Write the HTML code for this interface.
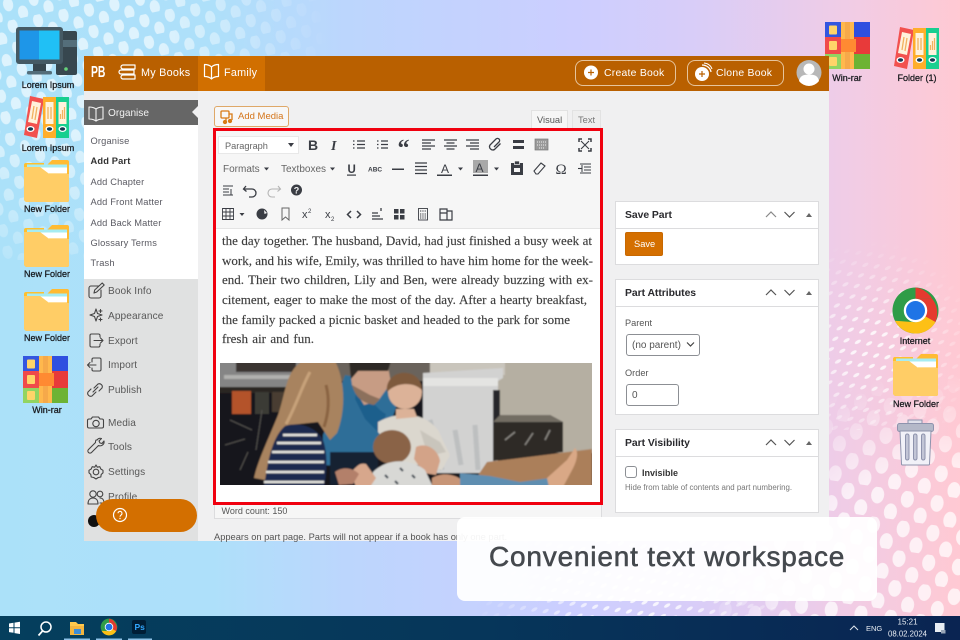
<!DOCTYPE html>
<html lang="en">
<head>
<meta charset="utf-8">
<title>Convenient text workspace</title>
<style>
*{box-sizing:border-box}
html,body{margin:0;padding:0;width:960px;height:640px;overflow:hidden}
body{position:relative;font-family:"Liberation Sans","Noto Sans CJK JP",sans-serif;background:linear-gradient(90deg,#abe1f9 0%,#aee0fa 22%,#bcd6fd 36%,#ccceff 60%,#d8cdf8 72%,#f0cce6 88%,#ffc9d3 100%)}
.abs,.t{position:absolute}
.t{white-space:nowrap;line-height:14px}
svg.layer{position:absolute;left:0;top:0;width:960px;height:640px}
.dl{font-size:9px;color:#16181c;transform:translateX(-50%);-webkit-text-stroke:.25px #16181c}
.sub{left:90.5px;font-size:9.3px;color:#5a5a62;letter-spacing:.15px}
.menu{left:108px;font-size:10.1px;color:#585858;letter-spacing:.1px}
.hd{color:#fff;font-size:10.8px;letter-spacing:.25px}
.panel{position:absolute;left:615px;width:204px;background:#fff;border:1px solid #dcdcde}
.panel .ph{height:27px;border-bottom:1px solid #dcdcde}
.pt{font-size:10.4px;color:#2a2a2e;font-weight:700;letter-spacing:-.05px;left:625px}
.pl{font-size:9.2px;color:#555;left:625px}
.ser{position:absolute;left:222px;height:20px;line-height:20px;font-family:"Liberation Serif","Noto Serif CJK SC",serif;font-size:13px;color:#3d3d3d;text-align:justify;text-align-last:justify;-webkit-text-stroke:.15px #3d3d3d}
.tb{font-size:9.6px;color:#666}
</style>
</head>
<body>

<!-- desktop dots -->
<svg class="layer" viewBox="0 0 960 640">
<defs>
<pattern id="d1" width="26" height="22" patternUnits="userSpaceOnUse" patternTransform="rotate(-12)"><ellipse cx="7" cy="6" rx="5" ry="7" fill="#fff" fill-opacity=".6"/><ellipse cx="20" cy="17" rx="5" ry="7" fill="#fff" fill-opacity=".6"/></pattern>
<pattern id="d2" width="30" height="30" patternUnits="userSpaceOnUse" patternTransform="rotate(8)"><ellipse cx="8" cy="8" rx="6.5" ry="8.5" fill="#fff" fill-opacity=".72"/><ellipse cx="23" cy="23" rx="6.5" ry="8.5" fill="#fff" fill-opacity=".72"/></pattern>
<pattern id="d3" width="18" height="14" patternUnits="userSpaceOnUse" patternTransform="rotate(-30)"><ellipse cx="5" cy="4" rx="3.5" ry="1.6" fill="#fff" fill-opacity=".8"/><ellipse cx="14" cy="11" rx="3.5" ry="1.6" fill="#fff" fill-opacity=".8"/></pattern>
<radialGradient id="m1" gradientUnits="userSpaceOnUse" cx="60" cy="40" r="270"><stop offset=".35" stop-color="#fff"/><stop offset="1" stop-color="#000"/></radialGradient>
<radialGradient id="m2" gradientUnits="userSpaceOnUse" cx="930" cy="600" r="230"><stop offset=".55" stop-color="#fff"/><stop offset="1" stop-color="#000"/></radialGradient>
<radialGradient id="m3" gradientUnits="userSpaceOnUse" cx="870" cy="350" r="110"><stop offset=".2" stop-color="#fff"/><stop offset="1" stop-color="#000"/></radialGradient>
<radialGradient id="m4" gradientUnits="userSpaceOnUse" cx="640" cy="625" r="170"><stop offset=".2" stop-color="#fff"/><stop offset="1" stop-color="#000"/></radialGradient>
<mask id="k1"><rect width="960" height="640" fill="url(#m1)"/></mask>
<mask id="k2"><rect width="960" height="640" fill="url(#m2)"/></mask>
<mask id="k3"><rect width="960" height="640" fill="url(#m3)"/></mask>
<mask id="k4"><rect width="960" height="640" fill="url(#m4)"/></mask>

<symbol id="folder" viewBox="0 0 45 42">
<path d="M0 5a2 2 0 0 1 2-2h18l0 2H43a2 2 0 0 1 2 2v33a2 2 0 0 1-2 2H3a3 3 0 0 1-3-3z" fill="#ffc02e"/>
<path d="M23 5l5-5h15a2 2 0 0 1 2 2v12H30z" fill="#ffbb33"/>
<rect x="3" y="4.500" width="40" height="9" fill="#fff"/>
<rect x="3" y="4.500" width="40" height="3" fill="#a6ecf2"/>
<path d="M0 7h16l8 6 1 1h20v26a2 2 0 0 1-2 2H3a3 3 0 0 1-3-3z" fill="#ffcd66"/>
</symbol>

<symbol id="rar" viewBox="0 0 45 47">
<rect width="16" height="15" fill="#3356e0"/><rect y="15" width="16" height="17" fill="#f04a4a"/><rect y="32" width="16" height="15" fill="#92d461"/>
<rect x="29" width="16" height="15" fill="#2f4fe0"/><rect x="29" y="15" width="16" height="17" fill="#e83a3a"/><rect x="29" y="32" width="16" height="15" fill="#6db334"/>
<rect x="16" width="13" height="47" fill="#ffb84d"/><rect x="20" width="5" height="47" fill="#f6a94a"/>
<rect x="16" y="17" width="15" height="13" fill="#ff8a32"/>
<rect x="4" y="3.500" width="8" height="9" rx="1" fill="#ffd469"/><rect x="4" y="19" width="8" height="9" rx="1" fill="#ffd469"/><rect x="4" y="35" width="8" height="9" rx="1" fill="#ffd469"/>
</symbol>

<symbol id="binder" viewBox="0 0 46 42">
<path d="M6 0l14 3-7 39-13-3z" fill="#f2514e"/>
<path d="M8 5l9 2-4 21-9-2z" fill="#fff2dc"/>
<path d="M10 10l-2 13M13 11l-2 13" stroke="#f2b25e" stroke-width="1.300"/>
<ellipse cx="6.500" cy="33" rx="4" ry="3" fill="#fff"/><ellipse cx="6.500" cy="33" rx="2.600" ry="1.700" fill="#123a52"/>
<rect x="19" y="1" width="13" height="41" fill="#ffae2a"/>
<rect x="21.500" y="6" width="8" height="22" fill="#fff2dc"/>
<path d="M24 11v12M27 11v12" stroke="#f2b25e" stroke-width="1.300"/>
<ellipse cx="25.500" cy="33" rx="4" ry="3" fill="#fff"/><ellipse cx="25.500" cy="33" rx="2.600" ry="1.700" fill="#123a52"/>
<rect x="32" y="1" width="13" height="41" fill="#17cf90"/>
<rect x="34.500" y="6" width="8" height="22" fill="#fff2dc"/>
<path d="M36.500 23v-5M38.500 23v-9M40.500 23v-12" stroke="#f2b25e" stroke-width="1.200"/>
<ellipse cx="38.500" cy="33" rx="4" ry="3" fill="#fff"/><ellipse cx="38.500" cy="33" rx="2.600" ry="1.700" fill="#123a52"/>
</symbol>

<symbol id="chrome" viewBox="0 0 48 48">
<circle cx="24" cy="24" r="23.500" fill="#2f9c47"/>
<path d="M3 34.500A23.500 23.500 0 0 0 44.400 35.700L36 24 24 36z" fill="#fdc016"/>
<path d="M24 12h17a23.500 23.500 0 0 1 3.400 23.700L34 30A12 12 0 0 0 24 12z" fill="#e53a2f"/>
<path d="M24 12h17A23.500 23.500 0 0 0 24 .5z" fill="#e53a2f"/>
<circle cx="24" cy="24" r="12" fill="#fff"/><circle cx="24" cy="24" r="9.700" fill="#1f74e6"/>
</symbol>
</defs>
<g mask="url(#k1)"><rect width="340" height="260" fill="url(#d1)"/></g>
<g mask="url(#k2)"><rect x="690" y="360" width="270" height="256" fill="url(#d2)"/></g>
<g mask="url(#k3)"><rect x="829" y="230" width="131" height="200" fill="url(#d3)"/></g>
<g mask="url(#k4)"><rect x="460" y="540" width="340" height="76" fill="url(#d3)"/></g>

<!-- desktop icons -->
<g>
<rect x="56" y="31" width="21" height="44" rx="2" fill="#37474f"/><rect x="56" y="40" width="21" height="7" fill="#546e7a"/><circle cx="66" cy="69" r="1.800" fill="#66d27a"/>
<rect x="16" y="27" width="47" height="37" rx="3" fill="#455a64"/><rect x="19.500" y="30.500" width="20" height="29" fill="#1e96e8"/><rect x="39" y="30.500" width="20.500" height="29" fill="#20c0f5"/>
<rect x="33" y="64" width="13" height="8" fill="#37474f"/><rect x="27" y="71" width="25" height="3.500" rx="1.500" fill="#546e7a"/>
</g>
<use href="#binder" x="24" y="96" width="46" height="42"/>
<use href="#folder" x="24" y="160" width="45" height="42"/>
<use href="#folder" x="24" y="225" width="45" height="42"/>
<use href="#folder" x="24" y="289" width="45" height="42"/>
<use href="#rar" x="23" y="356" width="45" height="47"/>
<use href="#rar" x="825" y="22" width="45" height="47"/>
<use href="#binder" x="894" y="27" width="46" height="42"/>
<use href="#chrome" x="892" y="287" width="47" height="47"/>
<use href="#folder" x="893" y="354" width="45" height="42"/>
<g fill="none" stroke="#8e93ad">
<path d="M908 424v-4h14v4" fill="#dfe0ea" stroke-width="1"/>
<rect x="897.500" y="423.500" width="36" height="8" rx="2" fill="#b4b8c8"/>
<path d="M900 431l1.500 33a1 1 0 0 0 1 1h26a1 1 0 0 0 1-1l1.500-33z" fill="#f1f1f8" stroke-width="1"/>
<rect x="905.500" y="434" width="3.500" height="26" rx="1.700" fill="#c2c5d6"/><rect x="913.500" y="434" width="3.500" height="26" rx="1.700" fill="#c2c5d6"/><rect x="921.500" y="434" width="3.500" height="26" rx="1.700" fill="#c2c5d6"/>
</g>
</svg>

<div class="t dl" style="left:48px;top:78px">Lorem Ipsum</div>
<div class="t dl" style="left:48px;top:141px">Lorem Ipsum</div>
<div class="t dl" style="left:47px;top:202px">New Folder</div>
<div class="t dl" style="left:47px;top:267px">New Folder</div>
<div class="t dl" style="left:47px;top:331px">New Folder</div>
<div class="t dl" style="left:47px;top:403px">Win-rar</div>
<div class="t dl" style="left:847px;top:71px">Win-rar</div>
<div class="t dl" style="left:917px;top:71px">Folder (1)</div>
<div class="t dl" style="left:915px;top:334px">Internet</div>
<div class="t dl" style="left:916px;top:397px">New Folder</div>

<!-- app window -->
<div class="abs" style="left:84px;top:56px;width:745px;height:485px;background:#f0f0f1"></div>
<div class="abs" style="left:84px;top:56px;width:745px;height:35px;background:#b96000"></div>
<div class="abs" style="left:198px;top:56px;width:67px;height:35px;background:#d16f00"></div>
<!-- sidebar -->
<div class="abs" style="left:84px;top:91px;width:114px;height:450px;background:#e0e1e1"></div>
<div class="abs" style="left:84px;top:91px;width:114px;height:9px;background:#ededee"></div>
<div class="abs" style="left:84px;top:100px;width:114px;height:25px;background:#666"></div>
<div class="abs" style="left:84px;top:125px;width:114px;height:154px;background:#fff"></div>
<div class="abs" style="left:192px;top:106px;width:0;height:0;border:6px solid transparent;border-left:0;border-right-color:#f0f0f1"></div>

<div class="t" style="left:108px;top:106.500px;font-size:10.1px;color:#f2f2f2">Organise</div>
<div class="t sub" style="top:134px">Organise</div>
<div class="t sub" style="top:154px;font-weight:700;color:#333">Add Part</div>
<div class="t sub" style="top:175px">Add Chapter</div>
<div class="t sub" style="top:195px">Add Front Matter</div>
<div class="t sub" style="top:216px">Add Back Matter</div>
<div class="t sub" style="top:236px">Glossary Terms</div>
<div class="t sub" style="top:256px">Trash</div>
<div class="t menu" style="top:285px">Book Info</div>
<div class="t menu" style="top:310px">Appearance</div>
<div class="t menu" style="top:335px">Export</div>
<div class="t menu" style="top:359px">Import</div>
<div class="t menu" style="top:384px">Publish</div>
<div class="t menu" style="top:417px">Media</div>
<div class="t menu" style="top:441px">Tools</div>
<div class="t menu" style="top:466px">Settings</div>
<div class="t menu" style="top:491px">Profile</div>

<!-- header text -->
<div class="t" style="left:91px;top:65px;font-size:16px;line-height:16px;font-weight:700;color:#fff;transform:scaleX(.65);transform-origin:left">PB</div>
<div class="t hd" style="left:141px;top:66px">My Books</div>
<div class="t hd" style="left:224px;top:66px">Family</div>
<div class="abs" style="left:574.500px;top:59.500px;width:101.500px;height:26.500px;border:1px solid #e6c49c;border-radius:8px"></div>
<div class="abs" style="left:687px;top:59.500px;width:96.500px;height:26.500px;border:1px solid #e6c49c;border-radius:8px"></div>
<div class="t hd" style="left:604px;top:66.500px;font-size:10.400px">Create Book</div>
<div class="t hd" style="left:716px;top:66.500px;font-size:10.400px">Clone Book</div>

<!-- add media + tabs -->
<div class="abs" style="left:214px;top:106px;width:75px;height:21px;border:1px solid #dfa868;border-radius:3px;background:#f7f7f7"></div>
<div class="t" style="left:238px;top:110px;font-size:9.500px;color:#d4751a">Add Media</div>
<div class="abs" style="left:531px;top:110px;width:37px;height:19px;background:#f6f6f6;border:1px solid #e2e2e2;border-bottom:0"></div>
<div class="abs" style="left:572px;top:110px;width:29px;height:19px;background:#eeeeee;border:1px solid #e2e2e2;border-bottom:0"></div>
<div class="t" style="left:537px;top:113px;font-size:9.300px;color:#555">Visual</div>
<div class="t" style="left:578px;top:113px;font-size:9.300px;color:#777">Text</div>

<!-- editor -->
<div class="abs" style="left:214px;top:505px;width:388px;height:14px;background:#f6f6f6;border:1px solid #dcdcde;border-top:0"></div>
<div class="abs" style="left:213px;top:128px;width:390px;height:377px;background:#fff;border:3px solid #f0000f"></div>
<div class="abs" style="left:216px;top:131px;width:384px;height:98px;background:#f6f6f6;border-bottom:1px solid #e4e4e4"></div>
<div class="abs" style="left:218px;top:136px;width:81px;height:18px;background:#fff;border:1px solid #e8e8e8"></div>
<div class="t tb" style="left:225px;top:138.500px;font-size:9.200px">Paragraph</div>
<div class="t tb" style="left:223px;top:163px;font-size:10px">Formats</div>
<div class="t tb" style="left:281px;top:163px;font-size:10px">Textboxes</div>

<div class="ser" style="top:231px;width:370px">the day together. The husband, David, had just finished a busy week at</div>
<div class="ser" style="top:250.500px;width:371px">work, and his wife, Emily, was thrilled to have him home for the week-</div>
<div class="ser" style="top:270px;width:371px">end. Their two children, Lily and Ben, were already buzzing with ex-</div>
<div class="ser" style="top:290px;width:365px">citement, eager to make the most of the day. After a hearty breakfast,</div>
<div class="ser" style="top:309.500px;width:348px">the family packed a picnic basket and headed to the park for some</div>
<div class="ser" style="top:329px;width:92px">fresh air and fun.</div>

<div class="t" style="left:221.500px;top:504px;font-size:9px;color:#555">Word count: 150</div>
<div class="t" style="left:214px;top:530px;font-size:9.300px;color:#555">Appears on part page. Parts will not appear if a book has only one part.</div>

<!-- right panels -->
<div class="panel" style="top:201px;height:64px"><div class="ph"></div></div>
<div class="panel" style="top:279px;height:136px"><div class="ph"></div></div>
<div class="panel" style="top:429px;height:84px"><div class="ph"></div></div>
<div class="t pt" style="top:208.500px">Save Part</div>
<div class="t pt" style="top:286.500px">Part Attributes</div>
<div class="t pt" style="top:436.500px">Part Visibility</div>
<div class="abs" style="left:625px;top:232px;width:38px;height:23.500px;background:#d46f00;border-radius:2px;border:1px solid #c86800"></div>
<div class="t" style="left:634px;top:237px;font-size:9.300px;color:#fff">Save</div>
<div class="t pl" style="top:316px">Parent</div>
<div class="abs" style="left:625.500px;top:334px;width:74px;height:22px;border:1px solid #8c8f94;border-radius:3px;background:#fff"></div>
<div class="t" style="left:632px;top:339px;font-size:10px;color:#555">(no parent)</div>
<div class="t pl" style="top:366px">Order</div>
<div class="abs" style="left:625.500px;top:384px;width:53px;height:22px;border:1px solid #8c8f94;border-radius:3px;background:#fff"></div>
<div class="t" style="left:632px;top:388.500px;font-size:10px;color:#555">0</div>
<div class="abs" style="left:625px;top:466px;width:12px;height:12px;border:1px solid #8c8f94;border-radius:3px;background:#fff"></div>
<div class="t" style="left:642px;top:466px;font-size:9px;font-weight:700;color:#333">Invisible</div>
<div class="t" style="left:625px;top:481px;font-size:7.900px;color:#777">Hide from table of contents and part numbering.</div>

<!-- overlay icons -->
<svg class="layer" viewBox="0 0 960 640" fill="none">
<defs>
<filter id="soft"><feGaussianBlur stdDeviation=".7"/></filter>
<clipPath id="pc"><rect x="220" y="363" width="372" height="122"/></clipPath>
</defs>

<!-- header icons -->
<g stroke="#fff" stroke-width="1.200" stroke-linejoin="round" stroke-linecap="round">
<path d="M123 65h12v4h-12a2 2 0 0 1 0-4zM121 70h13v4h-13a2 2 0 0 1 0-4zM123 75h12v4h-12a2 2 0 0 1 0-4z"/>
<path d="M211.500 67c-2-2-4-2.500-7-2.500v12c3 0 5 .5 7 2.500 2-2 4-2.500 7-2.500v-12c-3 0-5 .5-7 2.500zv12"/>
</g>
<circle cx="591" cy="72.500" r="7" fill="#fff"/><path d="M588 72.500h6M591 69.500v6" stroke="#b96000" stroke-width="1.200"/>
<path d="M702 65a9 8 0 0 1 9 7" stroke="#fff" stroke-width="1.300"/><path d="M704 63a9 8 0 0 1 8 6" stroke="#fff" stroke-width="1"/>
<circle cx="702" cy="74" r="7" fill="#fff"/><path d="M699 74h6M702 71v6" stroke="#b96000" stroke-width="1.200"/>
<circle cx="809" cy="72.500" r="12.500" fill="#b8b8b8"/>
<circle cx="809" cy="69" r="5.500" fill="#fff"/><path d="M799 81c1-5 4-6.500 10-6.500s9 1.500 10 6.500a12.500 12.500 0 0 1-20 0z" fill="#fff"/>

<!-- sidebar icons -->
<path d="M96 109c-2-1.500-4-2-7-2v12c3 0 5 .5 7 2 2-1.500 4-2 7-2v-12c-3 0-5 .5-7 2zv12" stroke="#f2f2f2" stroke-width="1.100" stroke-linejoin="round"/>
<g stroke="#444" stroke-width="1.100" stroke-linecap="round" stroke-linejoin="round">
<path d="M99 286h-8a2 2 0 0 0-2 2v8a2 2 0 0 0 2 2h8a2 2 0 0 0 2-2v-6M94 293l.7-3 7.500-7 2 2-7.500 7z"/>
<path d="M96 309l1.500 4.500 4.500 1.500-4.500 1.500-1.500 4.500-1.500-4.500-4.500-1.500 4.500-1.500zM100.500 309.500v3M99 311h3M100.500 318v3M99 319.500h3"/>
<path d="M100 337v-1.500a1.500 1.500 0 0 0-1.500-1.500h-7a1.500 1.500 0 0 0-1.500 1.500v10a1.500 1.500 0 0 0 1.500 1.500h7a1.500 1.500 0 0 0 1.500-1.500V344M94 340.500h9M100.500 338l2.500 2.500-2.500 2.500"/>
<path d="M92 362v-2.500a1.500 1.500 0 0 1 1.500-1.500h6a1.500 1.500 0 0 1 1.500 1.500v10a1.500 1.500 0 0 1-1.500 1.500h-6a1.500 1.500 0 0 1-1.500-1.500V368M96 365H87.500M90 362.500l-2.500 2.500 2.500 2.500"/>
<path d="M94 388l4-4a3 3 0 0 1 4 4l-3 3M96 392l-4 4a3 3 0 0 1-4-4l3-3M93 392l5-5"/>
<path d="M91 419l1.500-2h6l1.500 2h2a1.500 1.500 0 0 1 1.500 1.500v6a1.500 1.500 0 0 1-1.500 1.500h-13a1.500 1.500 0 0 1-1.500-1.500v-6a1.500 1.500 0 0 1 1.500-1.500z"/><circle cx="96" cy="423.500" r="3.200"/>
<path d="M99 441a4 4 0 0 1 4.500-1.500l-2.500 2.500 1 2 2 .5 2-2.500a4 4 0 0 1-5.500 4.500l-7 7a2 2 0 0 1-3-3l7-7a4 4 0 0 1 .5-2.500z" transform="translate(-2 -1)"/>
<circle cx="96" cy="472" r="2.800"/><path d="M96 465l1.300 2.200 2.500-.5 1 2.300 2.200 1.300v2.500l-1.800 1.700-.4 2.500-2.500.5-2.300 1.500-2.300-1.500-2.500-.5-.4-2.500-1.800-1.700v-2.500l2.200-1.300 1-2.300 2.500.5z"/>
<circle cx="93" cy="494" r="3.200"/><circle cx="100" cy="494" r="2.800"/><path d="M88 504c0-4 2-6 5-6s5 2 5 6zM100 498c2.500 0 4 2 4 5h-4"/>
</g>
<circle cx="94" cy="521" r="6" fill="#111"/>
<rect x="96" y="499" width="101" height="33" rx="16.500" fill="#d36f00"/>
<circle cx="120" cy="515" r="6.500" stroke="#fff" stroke-width="1.200"/>
<path d="M118 513.300a2 2 0 1 1 3.200 1.600c-.8.600-1.200 1-1.200 1.800" stroke="#fff" stroke-width="1.100"/><circle cx="120" cy="518.500" r=".7" fill="#fff"/>

<!-- add media -->
<g stroke="#d87a14" stroke-width="1.300">
<rect x="221" y="111" width="8" height="7" rx="1"/><path d="M229 114h3v6M226 118v3"/><circle cx="230" cy="121" r="1.500" fill="#d87a14"/><circle cx="225" cy="122" r="1.500" fill="#d87a14"/>
</g>

<!-- toolbar -->
<g fill="#3a3d44" font-family="Liberation Sans,sans-serif">
<path d="M288 143l6 0-3 4z"/>
<text x="308" y="150" font-size="14" font-weight="700">B</text>
<text x="331" y="150" font-size="14" font-weight="700" font-style="italic" font-family="Liberation Serif,serif">I</text>
<text x="397.500" y="156" font-size="24" font-weight="700" font-family="Liberation Serif,serif">“</text>
<text x="441" y="173" font-size="12">A</text>
<rect x="437" y="174.500" width="15" height="1.500"/>
<path d="M458 167.500h5l-2.500 3z M494 167.500h5l-2.500 3z M264 167.500h5l-2.500 3z M330 167.500h5l-2.500 3z M239.500 213h5l-2.500 3z"/>
<rect x="473" y="160" width="15" height="13" fill="#a8a8a8"/>
<text x="475.500" y="172" font-size="12">A</text>
<rect x="473" y="174.500" width="15" height="1.500"/>
<text x="347.500" y="173" font-size="11.500" font-weight="700">U</text>
<rect x="347" y="174.500" width="9" height="1.200"/>
<text x="368" y="171.500" font-size="6.500" font-weight="700">ABC</text>
<rect x="392" y="168.500" width="12" height="1.500"/>
<text x="555.500" y="174" font-size="15" font-family="Liberation Serif,serif">Ω</text>
<text x="302" y="218" font-size="11">x</text><text x="308" y="213" font-size="6">2</text>
<text x="325" y="218" font-size="11">x</text><text x="331" y="221" font-size="6">2</text>
<circle cx="296.500" cy="190" r="5.500"/>
<text x="293.800" y="193.500" font-size="9" font-weight="700" fill="#f6f6f6">?</text>
</g>
<g stroke="#3a3d44" stroke-width="1.200">
<path d="M353 141h1.500M357 141h8M353 144.500h1.500M357 144.500h8M353 148h1.500M357 148h8" />
<path d="M377 141h1.500M381 141h7M377 144.500h1.500M381 144.500h7M377 148h1.500M381 148h7" />
<path d="M422 140h13M422 143h9M422 146h13M422 149h9"/>
<path d="M444 140h13M446.500 143h8M444 146h13M446.500 149h8"/>
<path d="M466 140h13M470 143h9M466 146h13M470 149h9"/>
<path d="M494 147l5-5a2 2 0 0 0-3-3l-6 6a3.300 3.300 0 0 0 4.500 4.500l6-6" stroke-width="1.300"/>
<path d="M513 140h11v3h-11zM513 146h11v3h-11z" fill="#3a3d44" stroke="none"/>
<rect x="535" y="139" width="13" height="11" fill="#9a9a9a" stroke="#777" stroke-width=".7"/><path d="M537 142h9M537 145h9M539 148h5" stroke="#ddd" stroke-dasharray="1 1"/>
<path d="M581 141l8 8M589 141l-8 8" stroke-width="1.100"/><path d="M579 142v-3h3M591 142v-3h-3M579 148v3h3M591 148v3h-3" stroke-width="1.500"/>

<path d="M415 163h12M415 166.500h12M415 170h12M415 173.500h12"/>
<path d="M511 163h12v12h-12z" fill="#3a3d44" stroke="none"/><rect x="514.500" y="161" width="5" height="3.500" fill="#3a3d44" stroke="#f6f6f6" stroke-width=".7"/><path d="M514 168h6v4h-6z" fill="#f6f6f6" stroke="none"/>
<path d="M534 171l7-8 4 3-7 8h-2z" stroke-width="1.100"/>
<path d="M580 164h11M584 167h7M584 170h7M580 173h11M582 165v7" stroke-width="1"/><path d="M578 168.500h4" stroke-width="1.100"/>

<path d="M223 186h10M223 189h6M223 192h6M223 195h10M231 189v6" stroke-width="1"/>
<path d="M246 186l-2.500 3 3 2.500M244 189h8a4 4 0 0 1 0 8h-3" stroke-width="1.300"/>
<path d="M278 186l2.500 3-3 2.500M280 189h-8a4 4 0 0 0 0 8h3" stroke="#b4b4b4" stroke-width="1.100"/>

<path d="M222.500 208.500h11v11h-11zM222.500 212h11M222.500 216h11M226 208.500v11M230 208.500v11" stroke-width=".9"/>
<circle cx="262" cy="214" r="5.500" fill="#3a3d44" stroke="none"/><path d="M264 210l3 3-2.500 1z" fill="#f6f6f6" stroke="none"/>
<path d="M282 208h7v12l-3.500-3-3.500 3z" stroke-width="1" stroke="#666"/>
<path d="M351 211l-3.500 3.500 3.500 3.500M357 211l3.500 3.500-3.500 3.500" stroke-width="1.500"/>
<path d="M372 213h6M372 216h8M372 219h11M381 208v3" stroke-width="1.300"/>
<path d="M394 209h4.500v4.500H394zM400 209h4.500v4.500H400zM394 215h4.500v4.500H394zM400 215h4.500v4.500H400z" fill="#3a3d44" stroke="none"/>
<rect x="418.500" y="208.500" width="9" height="11.500" stroke-width=".9"/><path d="M420 211h6M420 214h6M420 216h6M420 218h6" stroke-width=".9" stroke-dasharray="1 .7"/>
<path d="M440 209h7v11h-7zM447 211h5v9h-5zM440 213h7" stroke-width="1.200"/>
</g>

<!-- panel icons -->
<g stroke="#888" stroke-width="1.200">
<path d="M766 217l5-5 5 5"/><path d="M784.500 212l5 5 5-5" stroke="#555"/>
<path d="M766 295l5-5 5 5" stroke="#555"/><path d="M784.500 290l5 5 5-5" stroke="#555"/>
<path d="M766 445l5-5 5 5" stroke="#555"/><path d="M784.500 440l5 5 5-5" stroke="#555"/>
</g>
<path d="M806 217l3-4 3 4zM806 295l3-4 3 4zM806 445l3-4 3 4z" fill="#666"/>
<path d="M687 342.500l3.500 3.500 3.500-3.500" stroke="#444" stroke-width="1.200"/>

<!-- photo -->
<g clip-path="url(#pc)"><g filter="url(#soft)">
<rect x="218" y="361" width="376" height="126" fill="#16161a"/>
<!-- wall -->
<rect x="490" y="361" width="104" height="92" fill="#b5afa2"/>
<rect x="425" y="361" width="80" height="14" fill="#c9c5bc"/>
<rect x="300" y="361" width="130" height="20" fill="#6a635b"/>
<!-- marble block -->
<path d="M423 373l80-5v10l-5 3v92h-75z" fill="#d2d2d1"/>
<path d="M423 378h75v8h-75z" fill="#e4e4e2"/>
<path d="M430 420l12 50M455 430l6 35M475 425l3 45" stroke="#bdbfc0" stroke-width="5"/>
<rect x="493" y="390" width="7" height="38" fill="#27272a"/>
<!-- dark step -->
<path d="M493 428l7-13h50l13 7v30l-70 9z" fill="#2d2a28"/>
<path d="M500 415h50l13 7h-70z" fill="#726d64"/>
<path d="M505 440l10-8M525 445l8-12M545 440l5-10" stroke="#8a8782" stroke-width="1.500"/>
<!-- floor -->
<path d="M487 462l105-13v38H470z" fill="#ab7f5a"/>
<!-- top-left frame -->
<rect x="218" y="361" width="84" height="28" fill="#858585"/>
<rect x="236" y="361" width="60" height="11" fill="#3a3431"/>
<rect x="224" y="375" width="76" height="4" fill="#b0b0ae"/>
<rect x="218" y="387" width="84" height="6" fill="#2c2622"/>
<rect x="232" y="391" width="19" height="23" fill="#b4532a"/>
<rect x="255" y="392" width="14" height="22" fill="#3b3a34"/>
<rect x="272" y="392" width="13" height="20" fill="#4a3e31"/>
<path d="M230 420l22 10M225 445l20-6M240 470l8-18M262 410l-6 40" stroke="#55534f" stroke-width="1"/>
<!-- man -->
<path d="M345 375l46 8 6 22-10 28-12 35-52-3 0-30z" fill="#2e6e98"/>
<path d="M358 380c10 18 20 30 28 34l-6 20-15-15-10-20z" fill="#1f5f8c"/>
<rect x="330" y="452" width="48" height="33" fill="#172431"/>
<path d="M349 361h38l4 22-13 18-14 4-12-20z" fill="#c79c84"/>
<path d="M349 361h42l-3 10-30 0-7 8z" fill="#2d2b27"/>
<path d="M352 385c4 14 12 18 22 20l6-6-10-4z" fill="#8c6f5c"/>
<!-- woman's hair -->
<path d="M300 363C286 372 285 395 278 415C268 440 258 460 254 478L265 480C272 460 280 440 290 425L318 422L330 440L337 433C346 410 345 380 335 361L300 361Z" fill="#a8835e"/>
<path d="M310 372c-8 14-14 34-24 52" stroke="#c7a27a" stroke-width="3"/>
<path d="M326 385c4 15 2 30-2 42" stroke="#8a6443" stroke-width="3"/>
<!-- striped top -->
<path d="M285 426c15-5 32 2 38 14 5 14 4 32 1 47h-60c3-18 6-48 21-61z" fill="#1b2a50"/>
<path d="M264 482h60M266 472h58M268 462h56M272 452h52M277 443h44M283 435h34" stroke="#e8e6de" stroke-width="2.500"/>
<!-- boy -->
<path d="M378 422c18-10 44-12 60 8l12 25-8 15-40-8-24-30z" fill="#dbd7ce"/>
<path d="M420 430l20 12 6 10-18 4z" fill="#c9c5bc"/>
<circle cx="405" cy="392" r="17" fill="#dcb298"/>
<path d="M387 392c-2-13 10-21 20-19 9 1 15 8 15 17-6-6-15-7-23-5-4 1-8 3-12 7z" fill="#7e5a3e"/>
<path d="M396 409h18l3 8-21 2z" fill="#dcb298"/>
<!-- hand -->
<path d="M416 447c10-5 22 2 24 14l-4 14-12-2-10-14z" fill="#d3a388"/>
<!-- baby -->
<ellipse cx="392" cy="447" rx="19" ry="17" fill="#8a6347"/>
<path d="M373 472c14-14 38-14 52-2l8 17h-64z" fill="#d8d8d5"/>
<path d="M385 475l3 3M400 468l3 3M412 475l3 3M395 481l3 3" stroke="#39424e" stroke-width="2"/>
<path d="M350 472c6-3 8-10 16-8l10 14-6 9h-14z" fill="#d7a78c"/>
<path d="M335 472c8-6 18-4 24 2l-6 10-14 1z" fill="#b3806a"/>
<!-- legs -->
<path d="M432 478c10-6 22-4 30 2l3 7h-33z" fill="#c79577"/>
<path d="M460 473l30 3 30 6 30-4 4 9H460z" fill="#5e8eb0"/>
<path d="M547 478l20-18 8-12c4 4 2 14-4 24l-8 15h-14z" fill="#d9a886"/>
</g></g>

<!-- taskbar -->
<defs><linearGradient id="tb" x1="0" x2="1"><stop offset="0" stop-color="#053f5d"/><stop offset=".5" stop-color="#06365a"/><stop offset="1" stop-color="#0a2452"/></linearGradient></defs>
<rect y="616" width="960" height="24" fill="url(#tb)"/>
<path d="M9 623.500l4.500-.7v4.500H9zM14.500 622.600l5.500-.9v5.600h-5.500zM9 628.300h4.500v4.500L9 632.100zM14.500 628.300H20V634l-5.500-.9z" fill="#fff"/>
<circle cx="46" cy="627" r="5" stroke="#fff" stroke-width="1.500"/><path d="M42.500 631l-4 4.500" stroke="#fff" stroke-width="1.700"/>
<path d="M70 622h6l2 2h6v11H70z" fill="#ffc94d"/><rect x="70" y="626" width="14" height="9" fill="#f4b63f"/><rect x="74" y="629" width="7" height="5" fill="#3d8ed8"/>
<use href="#chrome" x="100.500" y="618.500" width="17" height="17"/>
<rect x="132" y="620" width="14" height="14" rx="2" fill="#001e36"/>
<text x="134.500" y="630" font-size="8.500" font-weight="700" fill="#31a8ff" font-family="Liberation Sans,sans-serif">Ps</text>
<rect x="64" y="638.500" width="26" height="1.500" fill="#8fc3e8"/><rect x="96" y="638.500" width="26" height="1.500" fill="#8fc3e8"/><rect x="128" y="638.500" width="24" height="1.500" fill="#8fc3e8"/>
<path d="M850 630l4-4 4 4" stroke="#dfe6ee" stroke-width="1"/>
<g fill="#e8edf3" font-family="Liberation Sans,sans-serif" font-size="7.500">
<text x="866" y="631">ENG</text>
<text x="897.500" y="624.500" font-size="8">15:21</text>
<text x="888" y="636.500" font-size="7.800">08.02.2024</text>
</g>
<rect x="935" y="623" width="9.500" height="9" fill="#e8edf3"/><rect x="941" y="630" width="4.500" height="3.500" fill="#9aa7b8"/>
</svg>

<!-- caption -->
<div class="abs" style="left:457px;top:517px;width:420px;height:84px;background:rgba(255,255,255,.94);border-radius:8px"></div>
<div class="abs" style="left:489px;top:538px;font-size:28px;line-height:38px;color:#45494e;white-space:nowrap;letter-spacing:.8px;-webkit-text-stroke:.55px #45494e">Convenient text workspace</div>

</body>
</html>
